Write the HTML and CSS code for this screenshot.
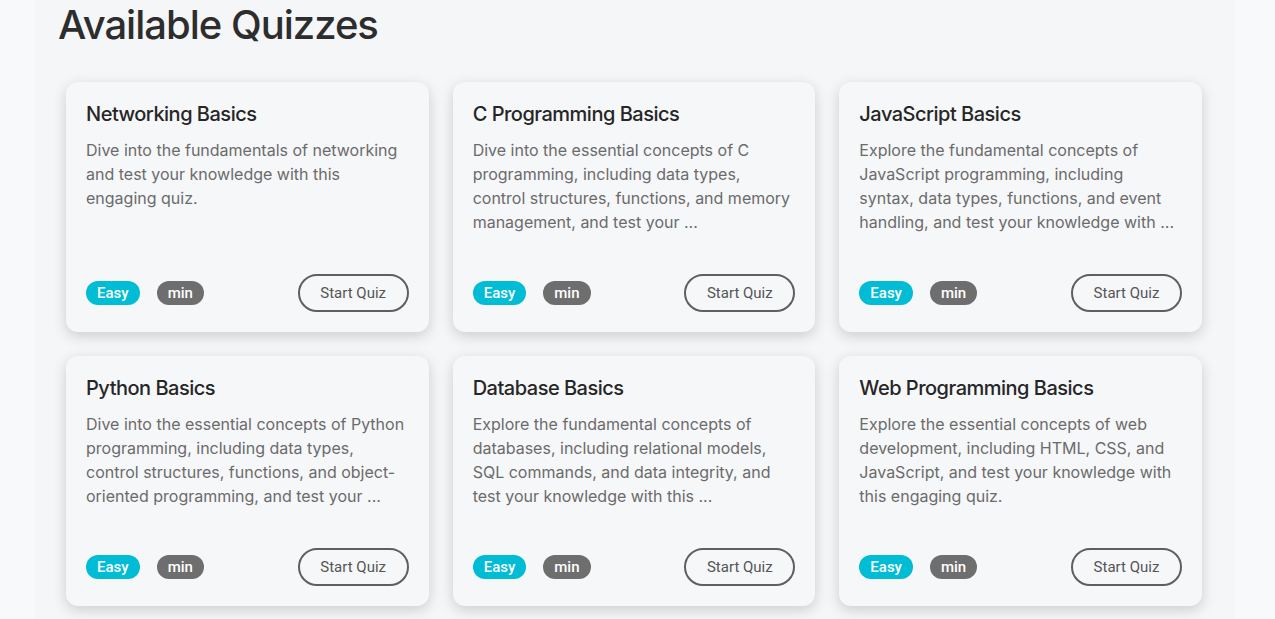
FILE: index.html
```html
<!DOCTYPE html>
<html lang="en">
<head>
<meta charset="utf-8">
<title>Available Quizzes</title>
<link rel="stylesheet" href="styles.css">
</head>
<body>
<main class="page">
  <h1 class="page-title">Available Quizzes</h1>
  <section class="quiz-grid">
    <article class="card">
      <h2 class="card-title">Networking Basics</h2>
      <p class="card-desc">Dive into the fundamentals of networking and test your knowledge with this engaging quiz.</p>
      <div class="card-footer">
        <span class="badge badge-easy">Easy</span>
        <span class="badge badge-time">min</span>
        <button class="btn-start">Start Quiz</button>
      </div>
    </article>
    <article class="card">
      <h2 class="card-title">C Programming Basics</h2>
      <p class="card-desc">Dive into the essential concepts of C programming, including data types, control structures, functions, and memory management, and test your ...</p>
      <div class="card-footer">
        <span class="badge badge-easy">Easy</span>
        <span class="badge badge-time">min</span>
        <button class="btn-start">Start Quiz</button>
      </div>
    </article>
    <article class="card">
      <h2 class="card-title">JavaScript Basics</h2>
      <p class="card-desc">Explore the fundamental concepts of JavaScript programming, including syntax, data types, functions, and event handling, and test your knowledge with ...</p>
      <div class="card-footer">
        <span class="badge badge-easy">Easy</span>
        <span class="badge badge-time">min</span>
        <button class="btn-start">Start Quiz</button>
      </div>
    </article>
    <article class="card">
      <h2 class="card-title">Python Basics</h2>
      <p class="card-desc">Dive into the essential concepts of Python programming, including data types, control structures, functions, and object-oriented programming, and test your ...</p>
      <div class="card-footer">
        <span class="badge badge-easy">Easy</span>
        <span class="badge badge-time">min</span>
        <button class="btn-start">Start Quiz</button>
      </div>
    </article>
    <article class="card">
      <h2 class="card-title">Database Basics</h2>
      <p class="card-desc">Explore the fundamental concepts of databases, including relational models, SQL commands, and data integrity, and test your knowledge with this ...</p>
      <div class="card-footer">
        <span class="badge badge-easy">Easy</span>
        <span class="badge badge-time">min</span>
        <button class="btn-start">Start Quiz</button>
      </div>
    </article>
    <article class="card">
      <h2 class="card-title">Web Programming Basics</h2>
      <p class="card-desc">Explore the essential concepts of web development, including HTML, CSS, and JavaScript, and test your knowledge with this engaging quiz.</p>
      <div class="card-footer">
        <span class="badge badge-easy">Easy</span>
        <span class="badge badge-time">min</span>
        <button class="btn-start">Start Quiz</button>
      </div>
    </article>
  </section>
</main>
</body>
</html>
```

FILE: styles.css
```css
* { box-sizing: border-box; }

html, body {
  margin: 0;
  padding: 0;
  background: #f8f9fa;
  font-family: Inter, "Noto Sans", sans-serif;
}

.page {
  width: 1200px;
  margin-left: 34px;
  background: #f5f6f8;
  padding: 0 24px 40px;
  min-height: 700px;
}

.page-title {
  margin: 0;
  padding-top: 1px;
  font-size: 40px;
  line-height: 48px;
  font-weight: 500;
  letter-spacing: -0.025em;
  color: #2d2d2d;
}

.quiz-grid {
  display: grid;
  grid-template-columns: repeat(3, 1fr);
  gap: 24px;
  padding: 33px 8px 0;
}

.card {
  height: 250px;
  background: #f6f7f9;
  border-radius: 12px;
  box-shadow: 0 4px 14px rgba(0, 0, 0, 0.17);
  padding: 20px;
  display: flex;
  flex-direction: column;
}

.card-title {
  margin: 0;
  font-size: 20px;
  line-height: 24px;
  font-weight: 500;
  letter-spacing: -0.025em;
  color: #262626;
}

.card-desc {
  margin: 12px 0 0;
  font-size: 16px;
  line-height: 24px;
  color: #6b6b6b;
}

.card-footer {
  margin-top: auto;
  display: flex;
  align-items: center;
  gap: 17px;
}

.badge {
  display: inline-block;
  height: 24px;
  line-height: 24px;
  padding: 0 11px;
  border-radius: 12px;
  font-family: Roboto, "Noto Sans", sans-serif;
  font-size: 15px;
  font-weight: 500;
  color: #fff;
}

.badge-easy { background: #00bcd4; }
.badge-time { background: #6e6e6e; }

.btn-start {
  margin-left: auto;
  height: 38px;
  width: 111px;
  border: 2px solid #5f5f5f;
  border-radius: 19px;
  background: transparent;
  font-family: Roboto, "Noto Sans", sans-serif;
  font-size: 15px;
  color: #555;
  cursor: pointer;
}
```
